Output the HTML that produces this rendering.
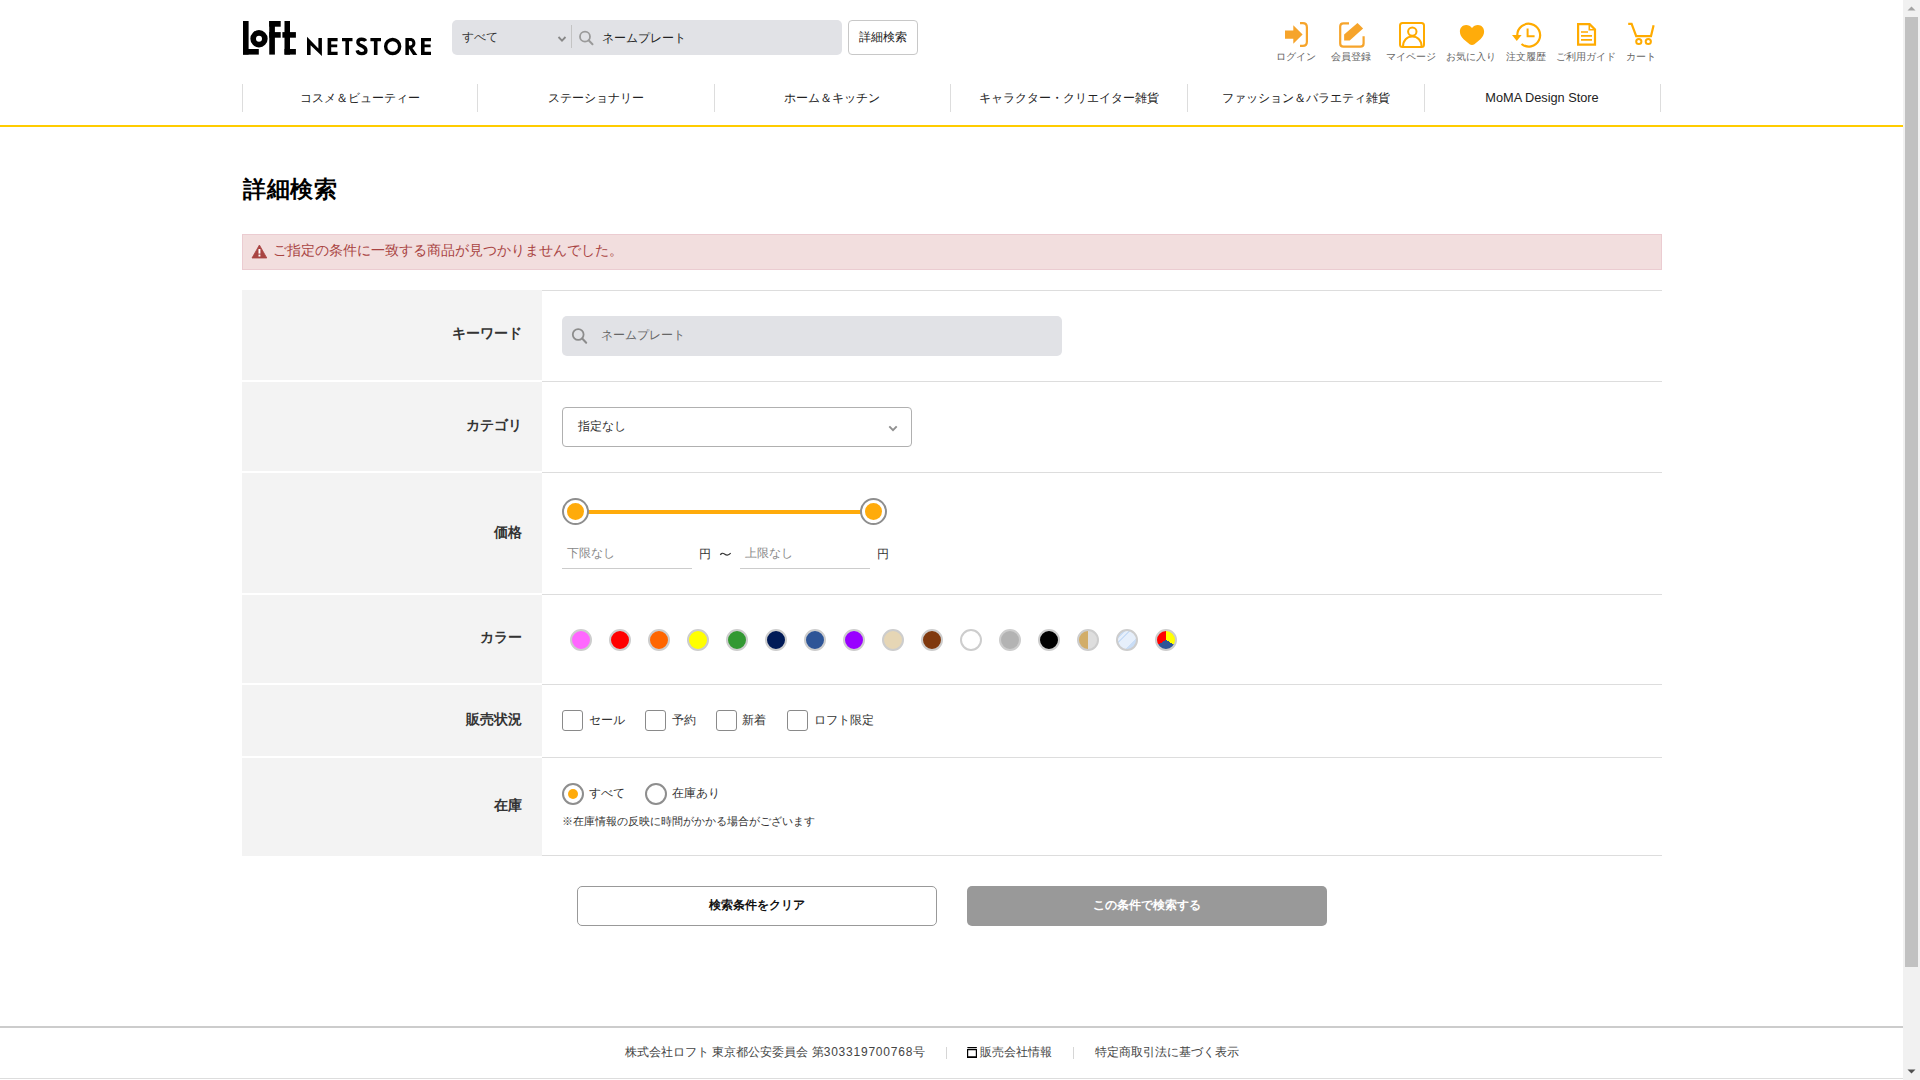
<!DOCTYPE html>
<html lang="ja">
<head>
<meta charset="utf-8">
<title>詳細検索 | LOFT NETSTORE</title>
<style>
html,body{margin:0;padding:0;}
body{width:1920px;height:1080px;overflow:hidden;position:relative;background:#fff;font-family:"Liberation Sans",sans-serif;color:#333;}
.a{position:absolute;white-space:nowrap;}
.t{position:absolute;white-space:nowrap;line-height:1;}
</style>
</head>
<body>

<!-- ===== HEADER ===== -->
<svg class="a" style="left:0;top:0" width="1903" height="70" viewBox="0 0 1903 70">
  <!-- LoFt -->
  <g fill="#000">
    <rect x="243" y="21" width="5.6" height="33.6"/>
    <rect x="243" y="49" width="15.8" height="5.6"/>
    <path fill-rule="evenodd" d="M259,38.75 m-8.65,0 a8.65,8.65 0 1,0 17.3,0 a8.65,8.65 0 1,0 -17.3,0 Z M259,38.75 m-3,0 a3,3 0 1,1 6,0 a3,3 0 1,1 -6,0 Z"/>
    <rect x="269.25" y="21" width="5.65" height="33.6"/>
    <rect x="269.25" y="21" width="11.45" height="5.7"/>
    <rect x="269.25" y="32.1" width="11.45" height="5.6"/>
    <rect x="284.5" y="21" width="5.5" height="33.6"/>
    <rect x="282.4" y="32.1" width="13.5" height="5.6"/>
    <rect x="284.5" y="49" width="11.4" height="5.6"/>
  </g>
  <!-- NETSTORE -->
  <g fill="#000">
    <path d="M307,36.8 L318.4,48.6 V38 H321.9 V56 L310.6,45.2 V55 H307 Z"/>
    <path d="M327.6,38 H337.6 V41.2 H331.2 V44.4 H337.2 V47.2 H331.2 V51.8 H337.6 V55 H327.6 Z"/>
    <path d="M342,38 H352.5 V41.2 H349 V55 H345.4 V41.2 H342 Z"/>
    <path d="M370.4,38 H381 V41.2 H377.5 V55 H373.9 V41.2 H370.4 Z"/>
    <path d="M421,38 H431 V41.2 H424.6 V44.4 H430.6 V47.2 H424.6 V51.8 H431 V55 H421 Z"/>
    <path d="M405.4,38 H410.5 C413.4,38 415.4,40.2 415.4,43.2 C415.4,45.6 414.1,47.3 412.4,48 L417.4,55 H413.1 L408.9,48.6 V55 H405.4 Z M408.9,41 V45.4 H410.3 C411.6,45.4 412.3,44.5 412.3,43.2 C412.3,41.9 411.6,41 410.3,41 Z" fill-rule="evenodd"/>
  </g>
  <g fill="none" stroke="#000" stroke-width="3.4">
    <path d="M365.6,41 C364.8,39.4 363.3,39.3 361.6,39.3 C359.3,39.3 357.9,40.6 357.9,42.2 C357.9,44.4 359.8,45.1 361.8,45.9 C364.3,46.9 365.9,48 365.9,50.6 C365.9,52.8 364.1,53.6 361.7,53.6 C359.2,53.6 357.6,52.3 357.2,50.4"/>
    <circle cx="392.65" cy="46.5" r="7.0"/>
  </g>
</svg>

<!-- search box -->
<div class="a" style="left:452px;top:20px;width:390px;height:35px;background:#e1e2e6;border-radius:5px;"></div>
<div class="t" style="left:462px;top:31px;font-size:12px;color:#333;">すべて</div>
<svg class="a" style="left:0;top:0" width="950" height="70" viewBox="0 0 950 70">
  <path d="M558.5,37 L562,40.6 L565.5,37" fill="none" stroke="#888" stroke-width="1.8"/>
  <rect x="571" y="25" width="1" height="23" fill="#c4c4c4"/>
  <circle cx="585" cy="36.7" r="5" fill="none" stroke="#9a9a9a" stroke-width="1.8"/>
  <path d="M588.6,40.3 L592.5,44.2" stroke="#9a9a9a" stroke-width="2" stroke-linecap="round"/>
</svg>
<div class="t" style="left:602px;top:32px;font-size:12px;color:#222;">ネームプレート</div>
<div class="a" style="left:848px;top:20px;width:68px;height:33px;border:1px solid #c8c8c8;border-radius:4px;background:#fff;"></div>
<div class="t" style="left:859px;top:31px;font-size:12px;color:#222;">詳細検索</div>

<!-- header icons -->
<svg class="a" style="left:0;top:0" width="1903" height="70" viewBox="0 0 1903 70">
  <g fill="#f6a42b">
    <path d="M1285,30.4 H1293.3 V25.3 L1302.6,34.5 L1293.3,43.8 V38.7 H1285 Z"/>
    <path d="M1344.1,34.4 L1357.5,23.1 L1363.1,28.4 L1349.7,40.6 H1344.1 Z"/>
  </g>
  <g fill="none" stroke="#f6a42b" stroke-width="2.2">
    <path d="M1300,23.2 H1302.8 C1305.4,23.2 1306.9,24.8 1306.9,27.4 V41.8 C1306.9,44.4 1305.4,45.9 1302.8,45.9 H1300"/>
    <path d="M1349,23.4 H1343.4 C1341.4,23.4 1340.2,24.6 1340.2,26.6 V43.4 C1340.2,45.4 1341.4,46.6 1343.4,46.6 H1360.4 C1362.4,46.6 1363.6,45.4 1363.6,43.4 V36.2"/>
  </g>
  <g fill="none" stroke="#ffab00" stroke-width="2">
    <rect x="1400" y="22.9" width="24" height="24" rx="2.5"/>
    <circle cx="1412.3" cy="31.6" r="4.2"/>
    <path d="M1403,46.5 C1403,40.3 1407,36.6 1412.3,36.6 C1417.6,36.6 1421.6,40.3 1421.6,46.5"/>
  </g>
  <path fill="#ffac0a" d="M1472,28.1 C1470.6,26 1468.5,24.9 1466.1,24.9 C1462.5,24.9 1459.9,27.7 1459.9,31.5 C1459.9,34.6 1461.4,36.9 1463.6,39.2 L1469.6,44.3 C1471,45.3 1473,45.3 1474.4,44.3 L1480.4,39.2 C1482.6,36.9 1484.1,34.6 1484.1,31.5 C1484.1,27.7 1481.5,24.9 1477.9,24.9 C1475.5,24.9 1473.4,26 1472,28.1 Z"/>
  <g fill="none" stroke="#ffab00" stroke-width="2.2">
    <path d="M1517.3,35 A11.4,11.4 0 1,1 1521.5,44"/>
    <path d="M1527.6,28.5 V36.2 H1534.6" stroke-width="2"/>
    <path d="M1578.1,24.1 H1589.6 L1595,29.5 V44.7 H1578.1 Z"/>
    <path d="M1589.3,24.5 V29.8 H1594.6" stroke-width="1.6"/>
    <path d="M1581,32 H1588 M1581,35.9 H1592 M1581,39.8 H1592" stroke-width="1.7"/>
    <path d="M1628.2,23.9 H1631.6 L1636.2,36.1 H1651 L1653.6,25.3"/>
    <circle cx="1638.8" cy="41.5" r="2.6" stroke-width="2"/>
    <circle cx="1648.3" cy="41.5" r="2.6" stroke-width="2"/>
  </g>
  <path fill="#ffab00" d="M1512,35 H1521.6 L1516.8,41 Z"/>
</svg>
<div class="t" style="left:1266px;top:52px;width:60px;text-align:center;font-size:10px;color:#666;">ログイン</div>
<div class="t" style="left:1321px;top:52px;width:60px;text-align:center;font-size:10px;color:#666;">会員登録</div>
<div class="t" style="left:1381px;top:52px;width:60px;text-align:center;font-size:10px;color:#666;">マイページ</div>
<div class="t" style="left:1441px;top:52px;width:60px;text-align:center;font-size:10px;color:#666;">お気に入り</div>
<div class="t" style="left:1496px;top:52px;width:60px;text-align:center;font-size:10px;color:#666;">注文履歴</div>
<div class="t" style="left:1556px;top:52px;width:60px;text-align:center;font-size:10px;color:#666;">ご利用ガイド</div>
<div class="t" style="left:1611px;top:52px;width:60px;text-align:center;font-size:10px;color:#666;">カート</div>

<!-- nav -->
<div class="a" style="left:242px;top:84px;width:1px;height:28px;background:#ddd;"></div>
<div class="a" style="left:477px;top:84px;width:1px;height:28px;background:#ddd;"></div>
<div class="a" style="left:714px;top:84px;width:1px;height:28px;background:#ddd;"></div>
<div class="a" style="left:950px;top:84px;width:1px;height:28px;background:#ddd;"></div>
<div class="a" style="left:1187px;top:84px;width:1px;height:28px;background:#ddd;"></div>
<div class="a" style="left:1424px;top:84px;width:1px;height:28px;background:#ddd;"></div>
<div class="a" style="left:1660px;top:84px;width:1px;height:28px;background:#ddd;"></div>
<div class="t" style="left:242px;top:92px;width:236px;text-align:center;font-size:12px;color:#222;">コスメ＆ビューティー</div>
<div class="t" style="left:478px;top:92px;width:236px;text-align:center;font-size:12px;color:#222;">ステーショナリー</div>
<div class="t" style="left:714px;top:92px;width:236px;text-align:center;font-size:12px;color:#222;">ホーム＆キッチン</div>
<div class="t" style="left:950px;top:92px;width:237px;text-align:center;font-size:12px;color:#222;">キャラクター・クリエイター雑貨</div>
<div class="t" style="left:1187px;top:92px;width:237px;text-align:center;font-size:12px;color:#222;">ファッション＆バラエティ雑貨</div>
<div class="t" style="left:1424px;top:91.5px;width:236px;text-align:center;font-size:12.75px;color:#222;">MoMA Design Store</div>
<div class="a" style="left:0;top:125px;width:1903px;height:2px;background:#ffcc00;"></div>

<!-- ===== MAIN ===== -->
<div class="t" style="left:243px;top:178px;font-size:23px;font-weight:bold;color:#000;letter-spacing:0.6px;">詳細検索</div>

<div class="a" style="left:242px;top:234px;width:1418px;height:34px;background:#f2dede;border:1px solid #ebccd1;"></div>
<svg class="a" style="left:250px;top:243px" width="20" height="18" viewBox="250 243 20 18">
  <path d="M259.4,245 L266.8,258 H252 Z" fill="#a94442" stroke="#a94442" stroke-width="0.8" stroke-linejoin="round"/>
  <rect x="258.5" y="249" width="1.9" height="4.6" fill="#fff"/>
  <rect x="258.5" y="254.6" width="1.9" height="1.9" fill="#fff"/>
</svg>
<div class="t" style="left:273px;top:243px;font-size:14px;color:#a94442;">ご指定の条件に一致する商品が見つかりませんでした。</div>

<!-- table -->
<div id="tbl">
  <!-- th backgrounds -->
  <div class="a" style="left:242px;top:290px;width:300px;height:90px;background:#f3f3f3;"></div>
  <div class="a" style="left:242px;top:382px;width:300px;height:89px;background:#f3f3f3;"></div>
  <div class="a" style="left:242px;top:473px;width:300px;height:120px;background:#f3f3f3;"></div>
  <div class="a" style="left:242px;top:595px;width:300px;height:88px;background:#f3f3f3;"></div>
  <div class="a" style="left:242px;top:685px;width:300px;height:71px;background:#f3f3f3;"></div>
  <div class="a" style="left:242px;top:758px;width:300px;height:98px;background:#f3f3f3;"></div>
  <!-- td borders -->
  <div class="a" style="left:542px;top:290px;width:1120px;height:1px;background:#ddd;"></div>
  <div class="a" style="left:542px;top:381px;width:1120px;height:1px;background:#ddd;"></div>
  <div class="a" style="left:542px;top:472px;width:1120px;height:1px;background:#ddd;"></div>
  <div class="a" style="left:542px;top:594px;width:1120px;height:1px;background:#ddd;"></div>
  <div class="a" style="left:542px;top:684px;width:1120px;height:1px;background:#ddd;"></div>
  <div class="a" style="left:542px;top:757px;width:1120px;height:1px;background:#ddd;"></div>
  <div class="a" style="left:542px;top:855px;width:1120px;height:1px;background:#ddd;"></div>
  <!-- labels -->
  <div class="t" style="left:242px;top:326px;width:280px;text-align:right;font-size:14px;font-weight:bold;color:#333;">キーワード</div>
  <div class="t" style="left:242px;top:418px;width:280px;text-align:right;font-size:14px;font-weight:bold;color:#333;">カテゴリ</div>
  <div class="t" style="left:242px;top:525px;width:280px;text-align:right;font-size:14px;font-weight:bold;color:#333;">価格</div>
  <div class="t" style="left:242px;top:630px;width:280px;text-align:right;font-size:14px;font-weight:bold;color:#333;">カラー</div>
  <div class="t" style="left:242px;top:712px;width:280px;text-align:right;font-size:14px;font-weight:bold;color:#333;">販売状況</div>
  <div class="t" style="left:242px;top:798px;width:280px;text-align:right;font-size:14px;font-weight:bold;color:#333;">在庫</div>
</div>

<!-- keyword input -->
<div class="a" style="left:562px;top:316px;width:500px;height:40px;background:#e1e2e6;border-radius:5px;"></div>
<svg class="a" style="left:565px;top:322px" width="30" height="28" viewBox="565 322 30 28">
  <circle cx="578.2" cy="334.5" r="5.4" fill="none" stroke="#8c8c8c" stroke-width="1.8"/>
  <path d="M582.2,338.5 L586.2,342.8" stroke="#8c8c8c" stroke-width="2" stroke-linecap="round"/>
</svg>
<div class="t" style="left:601px;top:329.4px;font-size:12px;color:#666;">ネームプレート</div>

<!-- category select -->
<div class="a" style="left:562px;top:407px;width:348px;height:38px;border:1px solid #b0b0b0;border-radius:4px;background:#fff;"></div>
<div class="t" style="left:578px;top:420px;font-size:12px;color:#333;">指定なし</div>
<svg class="a" style="left:885px;top:420px" width="16" height="14" viewBox="885 420 16 14">
  <path d="M889.3,426.3 L893,430.2 L896.7,426.3" fill="none" stroke="#909090" stroke-width="1.9"/>
</svg>

<!-- price slider -->
<div class="a" style="left:588px;top:510px;width:273px;height:4px;background:#ffab0b;"></div>
<div class="a" style="left:562px;top:498px;width:23px;height:23px;border:2px solid #8e8e8e;border-radius:50%;background:#fff;"></div>
<div class="a" style="left:567px;top:503px;width:17px;height:17px;border-radius:50%;background:#ffab0b;"></div>
<div class="a" style="left:860px;top:498px;width:23px;height:23px;border:2px solid #8e8e8e;border-radius:50%;background:#fff;"></div>
<div class="a" style="left:865px;top:503px;width:17px;height:17px;border-radius:50%;background:#ffab0b;"></div>

<div class="a" style="left:562px;top:568px;width:130px;height:1px;background:#ccc;"></div>
<div class="t" style="left:567px;top:547px;font-size:12px;color:#888;">下限なし</div>
<div class="t" style="left:699px;top:548px;font-size:12px;color:#333;">円</div>
<svg class="a" style="left:716px;top:548px" width="18" height="12" viewBox="716 548 18 12"><path d="M720.3,554.9 C721.3,553.1 722.8,552.8 724.5,554 C726.2,555.3 728.2,556.1 730.7,553.2" fill="none" stroke="#333" stroke-width="1.15"/></svg>
<div class="a" style="left:740px;top:568px;width:130px;height:1px;background:#ccc;"></div>
<div class="t" style="left:745px;top:547px;font-size:12px;color:#888;">上限なし</div>
<div class="t" style="left:877px;top:548px;font-size:12px;color:#333;">円</div>

<!-- colors -->
<div id="colors">
<div class="a" style="left:570px;top:629px;width:18px;height:18px;border:2px solid #cdcdcd;border-radius:50%;background:#ff66ff;"></div>
<div class="a" style="left:609px;top:629px;width:18px;height:18px;border:2px solid #cdcdcd;border-radius:50%;background:#ff0000;"></div>
<div class="a" style="left:648px;top:629px;width:18px;height:18px;border:2px solid #cdcdcd;border-radius:50%;background:#ff6600;"></div>
<div class="a" style="left:687px;top:629px;width:18px;height:18px;border:2px solid #cdcdcd;border-radius:50%;background:#ffff00;"></div>
<div class="a" style="left:726px;top:629px;width:18px;height:18px;border:2px solid #cdcdcd;border-radius:50%;background:#339933;"></div>
<div class="a" style="left:765px;top:629px;width:18px;height:18px;border:2px solid #cdcdcd;border-radius:50%;background:#001a57;"></div>
<div class="a" style="left:804px;top:629px;width:18px;height:18px;border:2px solid #cdcdcd;border-radius:50%;background:#2e5597;"></div>
<div class="a" style="left:843px;top:629px;width:18px;height:18px;border:2px solid #cdcdcd;border-radius:50%;background:#9900ff;"></div>
<div class="a" style="left:882px;top:629px;width:18px;height:18px;border:2px solid #cdcdcd;border-radius:50%;background:#e6d6b5;"></div>
<div class="a" style="left:921px;top:629px;width:18px;height:18px;border:2px solid #cdcdcd;border-radius:50%;background:#80390e;"></div>
<div class="a" style="left:960px;top:629px;width:18px;height:18px;border:2px solid #cdcdcd;border-radius:50%;background:#ffffff;"></div>
<div class="a" style="left:999px;top:629px;width:18px;height:18px;border:2px solid #cdcdcd;border-radius:50%;background:#b3b3b3;"></div>
<div class="a" style="left:1038px;top:629px;width:18px;height:18px;border:2px solid #cdcdcd;border-radius:50%;background:#000000;"></div>
<div class="a" style="left:1077px;top:629px;width:18px;height:18px;border:2px solid #cdcdcd;border-radius:50%;background:linear-gradient(90deg,#d2ad68 50%,#dedede 50%);"></div>
<div class="a" style="left:1116px;top:629px;width:18px;height:18px;border:2px solid #cdcdcd;border-radius:50%;background:linear-gradient(135deg,#c9ddf6 0%,#c9ddf6 22%,#e6effb 22%,#e6effb 30%,#c9ddf6 30%,#c9ddf6 36%,#e6effb 36%,#e6effb 70%,#c9ddf6 70%,#c9ddf6 100%);"></div>
<div class="a" style="left:1155px;top:629px;width:18px;height:18px;border:2px solid #cdcdcd;border-radius:50%;background:conic-gradient(from 0deg,#ffff00 0deg 120deg,#2e5597 120deg 240deg,#ff0000 240deg 360deg);"></div>
</div>

<!-- checkboxes -->
<div class="a" style="left:562px;top:710px;width:19px;height:19px;border:1px solid #8a8a8a;border-radius:3px;"></div>
<div class="t" style="left:589px;top:714px;font-size:12px;color:#333;">セール</div>
<div class="a" style="left:645px;top:710px;width:19px;height:19px;border:1px solid #8a8a8a;border-radius:3px;"></div>
<div class="t" style="left:672px;top:714px;font-size:12px;color:#333;">予約</div>
<div class="a" style="left:716px;top:710px;width:19px;height:19px;border:1px solid #8a8a8a;border-radius:3px;"></div>
<div class="t" style="left:742px;top:714px;font-size:12px;color:#333;">新着</div>
<div class="a" style="left:787px;top:710px;width:19px;height:19px;border:1px solid #8a8a8a;border-radius:3px;"></div>
<div class="t" style="left:814px;top:714px;font-size:12px;color:#333;">ロフト限定</div>

<!-- radios -->
<div class="a" style="left:562px;top:783px;width:18px;height:18px;border:2px solid #8e8e8e;border-radius:50%;"></div>
<div class="a" style="left:568px;top:789px;width:10px;height:10px;border-radius:50%;background:#ffab0b;"></div>
<div class="t" style="left:589px;top:787px;font-size:12px;color:#333;">すべて</div>
<div class="a" style="left:645px;top:783px;width:18px;height:18px;border:2px solid #8e8e8e;border-radius:50%;"></div>
<div class="t" style="left:672px;top:787px;font-size:12px;color:#333;">在庫あり</div>
<div class="t" style="left:562px;top:816px;font-size:11px;color:#333;">※在庫情報の反映に時間がかかる場合がございます</div>

<!-- buttons -->
<div class="a" style="left:577px;top:886px;width:358px;height:38px;border:1px solid #999;border-radius:5px;background:#fff;"></div>
<div class="t" style="left:577px;top:899px;width:360px;text-align:center;font-size:12px;font-weight:bold;color:#111;">検索条件をクリア</div>
<div class="a" style="left:967px;top:886px;width:360px;height:40px;border-radius:5px;background:#999;"></div>
<div class="t" style="left:967px;top:899px;width:360px;text-align:center;font-size:12px;font-weight:bold;color:#fff;">この条件で検索する</div>

<!-- footer -->
<div class="a" style="left:0;top:1026px;width:1903px;height:2px;background:#ccc;"></div>
<div class="a" style="left:0;top:1078px;width:1903px;height:1px;background:#ddd;"></div>
<div class="t" style="left:625px;top:1046px;font-size:12px;color:#444;">株式会社ロフト 東京都公安委員会 第<span style="letter-spacing:0.78px">303319700768</span>号</div>
<div class="a" style="left:946px;top:1047px;width:1px;height:12px;background:#d6d6d6;"></div>
<svg class="a" style="left:964px;top:1044px" width="16" height="16" viewBox="964 1044 16 16">
  <rect x="967.2" y="1046.9" width="9.8" height="1.3" rx="0.6" fill="#000"/>
  <path d="M967,1049 H977 V1058 H967 Z M968.2,1050.2 V1056.3 H975.8 V1050.2 Z" fill="#000" fill-rule="evenodd"/>
</svg>
<div class="t" style="left:980px;top:1046px;font-size:12px;color:#444;">販売会社情報</div>
<div class="a" style="left:1073px;top:1047px;width:1px;height:12px;background:#d6d6d6;"></div>
<div class="t" style="left:1095px;top:1046px;font-size:12px;color:#444;">特定商取引法に基づく表示</div>

<!-- scrollbar -->
<div class="a" style="left:1903px;top:0;width:17px;height:1080px;background:#f1f1f1;"></div>
<div class="a" style="left:1905px;top:17px;width:13px;height:950px;background:#c1c1c1;"></div>
<svg class="a" style="left:1903px;top:0" width="17" height="1080" viewBox="0 0 17 1080">
  <path d="M4.5,10.5 L8.5,6.5 L12.5,10.5 Z" fill="#a3a3a3"/>
  <path d="M4.5,1069.5 L8.5,1073.5 L12.5,1069.5 Z" fill="#505050"/>
</svg>

</body>
</html>
